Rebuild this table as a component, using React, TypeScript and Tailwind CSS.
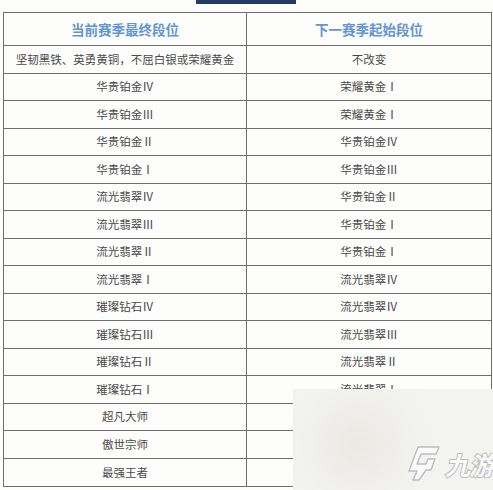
import React from "react";

const rows: [string, string][] = [
  ["坚韧黑铁、英勇黄铜，不屈白银或荣耀黄金", "不改变"],
  ["华贵铂金Ⅳ", "荣耀黄金Ⅰ"],
  ["华贵铂金Ⅲ", "荣耀黄金Ⅰ"],
  ["华贵铂金Ⅱ", "华贵铂金Ⅳ"],
  ["华贵铂金Ⅰ", "华贵铂金Ⅲ"],
  ["流光翡翠Ⅳ", "华贵铂金Ⅱ"],
  ["流光翡翠Ⅲ", "华贵铂金Ⅰ"],
  ["流光翡翠Ⅱ", "华贵铂金Ⅰ"],
  ["流光翡翠Ⅰ", "流光翡翠Ⅳ"],
  ["璀璨钻石Ⅳ", "流光翡翠Ⅳ"],
  ["璀璨钻石Ⅲ", "流光翡翠Ⅲ"],
  ["璀璨钻石Ⅱ", "流光翡翠Ⅱ"],
  ["璀璨钻石Ⅰ", "流光翡翠Ⅰ"],
  ["超凡大师", ""],
  ["傲世宗师", ""],
  ["最强王者", ""],
];

function Watermark() {
  return (
    <div className="absolute left-[293px] top-[389px] right-0 bottom-0 overflow-hidden bg-[#f3f3f1]">
      <div className="absolute left-[30px] top-[20px] w-[70px] h-[70px] rounded-full bg-[#e7e5df] blur-xl" />
      <div className="absolute right-0 bottom-[6px] flex items-center gap-[3px]">
        <svg width="36" height="38" viewBox="0 0 36 38" className="mb-[2px]">
          <path
            d="M12 3 L33 3 L30 10 L15 10 L11 20 L20 20 L22 15 L29 15 L25 26 L20 26 L13 36 L7 36 L11 27 L3 27 Z"
            fill="#fafafa"
            stroke="#bdbdbd"
            strokeWidth="1.4"
            strokeLinejoin="round"
          />
        </svg>
        <span className="text-[25px] leading-none font-bold italic text-[#fafafa] [-webkit-text-stroke:2px_#bdbdbd] [paint-order:stroke_fill] tracking-[-1px] [font-family:'Noto_Sans_CJK_SC',sans-serif]">
          九游
        </span>
      </div>
    </div>
  );
}

export default function App() {
  return (
    <div className="relative w-[493px] h-[490px] overflow-hidden bg-[#fdfdfc] [font-family:'Noto_Sans_CJK_SC','Noto_Sans',sans-serif]">
      <div className="flex justify-center">
        <div className="w-[100px] h-[4px] bg-[#243b64] ml-[-1px]" />
      </div>
      <div className="mt-[8px] ml-[3px] w-[489px] border border-[#6e6e6e]">
        <div className="flex h-[33px] border-b border-[#6e6e6e]">
          <div className="w-[243px] border-r border-[#6e6e6e] flex items-center justify-center text-[13.5px] font-bold text-[#6295d3]">
            当前赛季最终段位
          </div>
          <div className="flex-1 flex items-center justify-center text-[13.5px] font-bold text-[#6295d3]">
            下一赛季起始段位
          </div>
        </div>
        {rows.map(([a, b], i) => (
          <div
            key={i}
            className={`flex h-[27.5px] ${i < rows.length - 1 ? "border-b border-[#6e6e6e]" : ""}`}
          >
            <div className="w-[243px] border-r border-[#6e6e6e] flex items-center justify-center text-[11.5px] text-[#4a4a4a]">
              {a}
            </div>
            <div className="flex-1 flex items-center justify-center text-[11.5px] text-[#4a4a4a]">
              {b}
            </div>
          </div>
        ))}
      </div>
      <Watermark />
    </div>
  );
}
